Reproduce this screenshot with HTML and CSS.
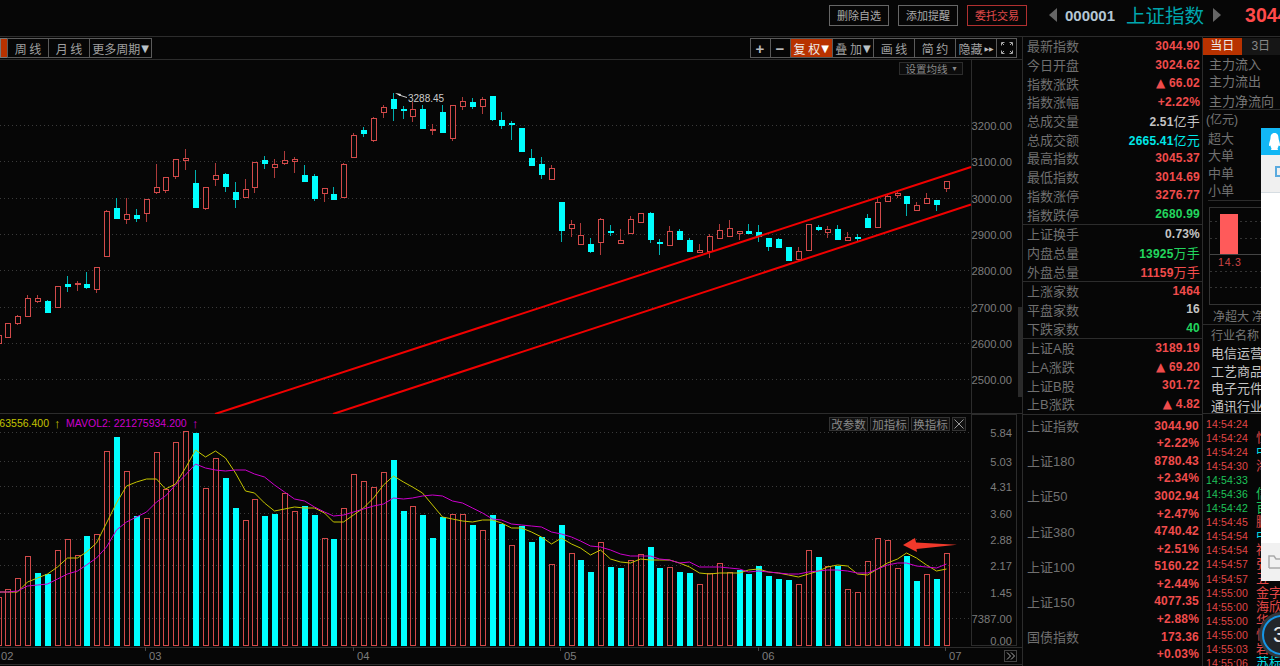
FILE: index.html
```html
<!DOCTYPE html>
<html lang="zh-CN">
<head>
    <meta charset="UTF-8">
    <title>上证指数</title>
    <link rel="stylesheet" href="styles.css">
</head>
<body>
<div class="app">
    <div class="top-bar">
        <button class="top-btn">删除自选</button>
        <button class="top-btn">添加提醒</button>
        <button class="top-btn top-btn-red">委托交易</button>
        <span class="tri-left"></span>
        <span class="stock-code">000001</span>
        <span class="stock-name">上证指数</span>
        <span class="tri-right"></span>
        <span class="stock-price">3044.90</span>
    </div>

    <div class="main">
        <div class="chart-col">
            <div class="toolbar">
                <div class="tool-group">
                    <div class="tool tool-stub"></div>
                    <div class="tool tool-period">周 线</div>
                    <div class="tool tool-period">月 线</div>
                    <div class="tool tool-more">更多周期<span class="caret">▼</span></div>
                </div>
                <div class="tool-group">
                    <div class="tool tool-sign">+</div>
                    <div class="tool tool-sign">−</div>
                    <div class="tool tool-on tool-wide">复 权<span class="caret caret-white">▼</span></div>
                    <div class="tool tool-wide">叠 加<span class="caret">▼</span></div>
                    <div class="tool tool-wide">画 线</div>
                    <div class="tool tool-wide">简 约</div>
                    <div class="tool tool-wide">隐藏<span class="fast">▶▶</span></div>
                    <div class="tool tool-sign">
                        <svg width="12" height="12" viewBox="0 0 12 12" fill="none" stroke="#aaa">
                            <path d="M0.5 3.5V0.5H3.5M8.5 0.5H11.5V3.5M11.5 8.5V11.5H8.5M3.5 11.5H0.5V8.5"/>
                            <path d="M1 1L3 3M11 1L9 3M11 11L9 9M1 11L3 9"/>
                        </svg>
                    </div>
                </div>
            </div>

            <div class="pane">
                <svg id="klineChart" class="chart kline" viewBox="0 60 1022 354"></svg>
                <div class="ma-set">设置均线<span class="ma-caret">▾</span></div>
                <div class="pane-handle"></div>
            </div>

            <div class="pane">
                <svg id="volChart" class="chart vol" viewBox="0 414 1022 252"></svg>
                <div class="vol-tools">
                    <div class="vol-btn">改参数</div>
                    <div class="vol-btn">加指标</div>
                    <div class="vol-btn">换指标</div>
                    <div class="vol-btn vol-close">
                        <svg width="10" height="10" viewBox="0 0 10 10" stroke="#999" fill="none"><path d="M0.5 0.5L9.5 9.5M9.5 0.5L0.5 9.5"/></svg>
                    </div>
                </div>
                <div class="scroll-next">
                    <svg width="10" height="8" viewBox="0 0 10 8" fill="none" stroke="#aaa"><path d="M1 0.5L4.5 4L1 7.5M5 0.5L8.5 4L5 7.5"/></svg>
                </div>
            </div>
        </div>

        <div class="quote-col">
            <div class="quote-section">
                <div class="row"><span class="lbl">最新指数</span><span class="up">3044.90</span></div>
                <div class="row"><span class="lbl">今日开盘</span><span class="up">3024.62</span></div>
                <div class="row"><span class="lbl">指数涨跌</span><span class="up"><span class="arrow">▲</span> 66.02</span></div>
                <div class="row"><span class="lbl">指数涨幅</span><span class="up">+2.22%</span></div>
                <div class="row"><span class="lbl">总成交量</span><span class="flat">2.51<i>亿手</i></span></div>
                <div class="row"><span class="lbl">总成交额</span><span class="cyan">2665.41<i>亿元</i></span></div>
                <div class="row"><span class="lbl">最高指数</span><span class="up">3045.37</span></div>
                <div class="row"><span class="lbl">最低指数</span><span class="up">3014.69</span></div>
                <div class="row"><span class="lbl">指数涨停</span><span class="up">3276.77</span></div>
                <div class="row"><span class="lbl">指数跌停</span><span class="down">2680.99</span></div>
            </div>
            <div class="quote-section">
                <div class="row"><span class="lbl">上证换手</span><span class="flat">0.73%</span></div>
                <div class="row"><span class="lbl">内盘总量</span><span class="down">13925<i>万手</i></span></div>
                <div class="row"><span class="lbl">外盘总量</span><span class="up">11159<i>万手</i></span></div>
            </div>
            <div class="quote-section">
                <div class="row"><span class="lbl">上涨家数</span><span class="up">1464</span></div>
                <div class="row"><span class="lbl">平盘家数</span><span class="flat">16</span></div>
                <div class="row"><span class="lbl">下跌家数</span><span class="down">40</span></div>
            </div>
            <div class="quote-section">
                <div class="row"><span class="lbl">上证A股</span><span class="up">3189.19</span></div>
                <div class="row"><span class="lbl">上A涨跌</span><span class="up"><span class="arrow">▲</span> 69.20</span></div>
                <div class="row"><span class="lbl">上证B股</span><span class="up">301.72</span></div>
                <div class="row"><span class="lbl">上B涨跌</span><span class="up"><span class="arrow">▲</span> 4.82</span></div>
            </div>
            <div class="index-list">
                <div class="idx-row"><span class="lbl">上证指数</span><span class="up">3044.90</span></div>
                <div class="idx-row"><span></span><span class="up">+2.22%</span></div>
                <div class="idx-row"><span class="lbl">上证180</span><span class="up">8780.43</span></div>
                <div class="idx-row"><span></span><span class="up">+2.34%</span></div>
                <div class="idx-row"><span class="lbl">上证50</span><span class="up">3002.94</span></div>
                <div class="idx-row"><span></span><span class="up">+2.47%</span></div>
                <div class="idx-row"><span class="lbl">上证380</span><span class="up">4740.42</span></div>
                <div class="idx-row"><span></span><span class="up">+2.51%</span></div>
                <div class="idx-row"><span class="lbl">上证100</span><span class="up">5160.22</span></div>
                <div class="idx-row"><span></span><span class="up">+2.44%</span></div>
                <div class="idx-row"><span class="lbl">上证150</span><span class="up">4077.35</span></div>
                <div class="idx-row"><span></span><span class="up">+2.88%</span></div>
                <div class="idx-row"><span class="lbl">国债指数</span><span class="up">173.36</span></div>
                <div class="idx-row"><span></span><span class="up">+0.03%</span></div>
            </div>
        </div>

        <div class="flow-col">
            <div class="tabs">
                <div class="tab tab-on">当日</div>
                <div class="tab">3日</div>
            </div>
            <div class="flow-head">
                <div class="flow-line">主力流入</div>
                <div class="flow-line">主力流出</div>
                <div class="flow-line flow-net">主力净流向</div>
            </div>
            <div class="flow-unit">(亿元)</div>
            <div class="flow-sizes">
                <div class="flow-size">超大</div>
                <div class="flow-size">大单</div>
                <div class="flow-size">中单</div>
                <div class="flow-size">小单</div>
            </div>
            <div class="mini-chart">
                <svg width="70" height="96" viewBox="0 0 70 96">
                    <g stroke="#333" stroke-dasharray="2 3">
                        <path d="M0 13.5H70M0 30.5H70M0 63.5H70M0 79.5H70"/>
                    </g>
                    <path d="M0 46.5H70" stroke="#444"/>
                    <rect x="10" y="6" width="18" height="40" fill="#ff5a5a"/>
                    <text x="8" y="58" class="mini-label">14.3</text>
                </svg>
            </div>
            <div class="mini-axis"><span>净超大</span><span>净大单</span></div>
            <div class="sector-list">
                <div class="sector-head">行业名称</div>
                <div class="sector">电信运营</div>
                <div class="sector">工艺商品</div>
                <div class="sector">电子元件</div>
                <div class="sector">通讯行业</div>
            </div>
            <div class="ticks" id="ticks"></div>
        </div>
    </div>

    <div class="chat-window">
        <div class="chat-head">
            <svg width="11" height="17" viewBox="0 0 11 17" fill="#fff"><path d="M5.5 0C8.5 0 9.5 2.5 9.5 5C9.5 7 11 9.5 11 12C11 13.5 10 13 9.5 12.5C9.5 14 8.5 15 8.5 15.5L9 17H2L2.5 15.5C2.5 15 1.5 14 1.5 12.5C1 13 0 13.5 0 12C0 9.5 1.5 7 1.5 5C1.5 2.5 2.5 0 5.5 0Z"/></svg>
        </div>
        <div class="chat-tools"><span class="chat-icon"></span></div>
        <div class="chat-body"></div>
        <div class="chat-foot">
            <svg width="14" height="16" viewBox="0 0 14 16" fill="none" stroke="#aaa" stroke-width="1.5"><path d="M1 14V2H6L8 5H14M1 14H14"/></svg>
        </div>
    </div>
    <div class="badge"><span class="badge-ring">3</span></div>
</div>
<script src="chart.js"></script>
</body>
</html>
```

FILE: styles.css
```css
* {
    box-sizing: border-box;
}
body {
    margin: 0;
    padding: 0;
    background-color: #060606;
    color: #777;
    font-family: "Liberation Sans", "Noto Sans CJK SC", sans-serif;
    font-size: 13px;
    overflow: hidden;
}
.app {
    position: relative;
    width: 1280px;
    height: 666px;
    overflow: hidden;
}

/* top bar */
.top-bar {
    display: flex;
    align-items: center;
    height: 37px;
    padding: 0 0 6px 829px;
    border-bottom: 1px solid #2c2c2c;
    white-space: nowrap;
    overflow: hidden;
}
.top-bar > * {
    flex-shrink: 0;
}
.top-btn {
    width: 60px;
    height: 21px;
    margin-right: 9px;
    padding: 0;
    background-color: transparent;
    border: 1px solid #666;
    color: #aaa;
    font-family: "Noto Sans CJK SC", sans-serif;
    font-size: 11px;
    line-height: 19px;
}
.top-btn-red {
    margin-right: 22px;
    border-color: #b03030;
    color: #e04a4a;
}
.tri-left,
.tri-right {
    width: 0;
    height: 0;
    border-top: 7px solid transparent;
    border-bottom: 7px solid transparent;
}
.tri-left {
    border-right: 8px solid #666;
    margin-right: 8px;
}
.tri-right {
    border-left: 8px solid #666;
    margin-left: 9px;
}
.stock-code {
    color: #b4c6d4;
    font-size: 15px;
    font-weight: bold;
    margin-right: 11px;
}
.stock-name {
    color: #00a5ad;
    font-family: "Noto Sans CJK SC", sans-serif;
    font-size: 19.5px;
    line-height: 30px;
}
.stock-price {
    margin-left: 24px;
    color: #ff4a4a;
    font-size: 19.5px;
    font-weight: bold;
}

/* main area */
.main {
    display: flex;
    height: 629px;
}
.chart-col {
    width: 1022px;
    flex-shrink: 0;
}
.toolbar {
    display: flex;
    justify-content: space-between;
    height: 23px;
    padding: 1px 5px 2px 0;
    border-bottom: 1px solid #2c2c2c;
}
.tool-group {
    display: flex;
}
.tool {
    display: flex;
    align-items: center;
    justify-content: center;
    height: 20px;
    border: 1px solid #5a5a5a;
    margin-right: -1px;
    color: #a0a0a0;
    font-family: "Noto Sans CJK SC", sans-serif;
    font-size: 12px;
    white-space: pre;
}
.tool-group:last-child .tool:last-child {
    margin-right: 0;
}
.tool-stub {
    width: 8px;
    background-color: #b83200;
    border-color: #777;
}
.tool-period {
    width: 42px;
}
.tool-more {
    width: 63px;
}
.tool-sign {
    width: 21px;
    font-family: "Liberation Sans", sans-serif;
    font-size: 15px;
    font-weight: bold;
    color: #bbb;
}
.tool-wide {
    width: 42px;
}
.tool-on {
    background-color: #b83200;
    color: #eee;
    width: 43.5px;
}
.caret {
    font-family: "DejaVu Sans", sans-serif;
    font-size: 10px;
    margin-left: 1px;
    color: #b9c2c8;
}
.caret-white {
    color: #fff;
}
.fast {
    font-family: "DejaVu Sans", sans-serif;
    font-size: 6px;
    margin-left: 2px;
    color: #bbb;
}

.pane {
    position: relative;
}
.chart {
    display: block;
    width: 1022px;
}
.kline {
    height: 354px;
}
.vol {
    height: 252px;
}
.axis-text {
    fill: #7c7c7c;
    font-family: "Liberation Sans", sans-serif;
    font-size: 11.2px;
}
.peak-text {
    fill: #ccc;
    font-family: "Liberation Sans", sans-serif;
    font-size: 10px;
}
.ma-text {
    font-family: "Liberation Sans", sans-serif;
    font-size: 10.5px;
}
.ma-arrow {
    font-family: "Liberation Sans", sans-serif;
    font-size: 13px;
}
.ma-set {
    position: absolute;
    left: 899px;
    top: 2px;
    display: flex;
    align-items: center;
    justify-content: center;
    width: 64px;
    height: 13px;
    background-color: #0c0c0c;
    border: 1px solid #2c2c2c;
    color: #8a8a8a;
    font-family: "Noto Sans CJK SC", sans-serif;
    font-size: 10.5px;
}
.ma-caret {
    margin-left: 5px;
    font-family: "DejaVu Sans", sans-serif;
    font-size: 8px;
}
.pane-handle {
    position: absolute;
    left: 1018px;
    top: 247px;
    width: 4px;
    height: 90px;
    background-color: #2a2a2a;
}
.vol-tools {
    position: absolute;
    left: 829px;
    top: 3px;
    display: flex;
    gap: 2px;
}
.vol-btn {
    display: flex;
    align-items: center;
    justify-content: center;
    width: 39px;
    height: 14px;
    border: 1px solid #333;
    background-color: #111;
    color: #888;
    font-family: "Noto Sans CJK SC", sans-serif;
    font-size: 11.5px;
}
.vol-close {
    width: 14px;
}
.scroll-next {
    position: absolute;
    left: 1004px;
    top: 236px;
    display: flex;
    align-items: center;
    justify-content: center;
    width: 13px;
    height: 12px;
    border: 1px solid #444;
}

/* quote table */
.quote-col {
    width: 181px;
    flex-shrink: 0;
    border-left: 1px solid #2c2c2c;
    border-right: 1px solid #2c2c2c;
    font-weight: bold;
    font-size: 12px;
    letter-spacing: 0.2px;
}
.quote-section {
    border-bottom: 1px solid #2c2c2c;
}
.row {
    display: flex;
    justify-content: space-between;
    align-items: center;
    height: 18.7px;
    padding: 0 2px 1px 4px;
    white-space: nowrap;
}
.lbl {
    color: #707070;
    font-family: "Liberation Sans", "Noto Sans CJK SC", sans-serif;
    font-size: 13px;
    font-weight: normal;
    letter-spacing: 0;
}
.arrow {
    font-family: "DejaVu Sans", sans-serif;
    font-weight: normal;
}
.row i {
    font-family: "Noto Sans CJK SC", sans-serif;
    font-size: 13px;
    font-style: normal;
    font-weight: normal;
}
.up {
    color: #f04c4c;
}
.down {
    color: #22d65e;
}
.flat {
    color: #c4c4c4;
}
.cyan {
    color: #00e8e8;
}
.index-list {
    padding-top: 2px;
}
.idx-row {
    display: flex;
    justify-content: space-between;
    align-items: center;
    height: 17.6px;
    padding: 0 3px 0 4px;
}

/* capital flow and tick list */
.flow-col {
    flex: 1;
    min-width: 0;
    overflow: hidden;
}
.tabs {
    display: flex;
    height: 17px;
    margin-top: 1px;
}
.tab {
    width: 45px;
    background-color: #161616;
    color: #888;
    text-align: center;
    font-size: 12px;
    line-height: 17px;
}
.tab-on {
    background-color: #b83200;
    color: #eee;
}
.flow-head {
    height: 55px;
    margin-left: 6px;
    padding-top: 1px;
    white-space: nowrap;
    border-bottom: 1px solid #2c2c2c;
}
.flow-line {
    height: 17px;
    line-height: 17px;
}
.flow-net {
    height: 19px;
    line-height: 23px;
}
.flow-unit {
    height: 18px;
    line-height: 20px;
    padding-left: 3px;
    font-size: 12px;
}
.flow-sizes {
    height: 73px;
    margin-left: 5px;
    padding-top: 2px;
    border-bottom: 1px solid #2c2c2c;
}
.flow-size {
    height: 17.4px;
    line-height: 17.4px;
    color: #707070;
}
.mini-chart {
    height: 98px;
    margin: 6px 0 0 6px;
    border: 1px solid #333;
    border-right: 0;
}
.mini-chart svg {
    display: block;
}
.mini-label {
    fill: #d04646;
    font-family: "Liberation Sans", sans-serif;
    font-size: 10.5px;
    letter-spacing: 0.8px;
}
.mini-axis {
    display: flex;
    gap: 3px;
    height: 19px;
    padding: 2px 0 0 10px;
    line-height: 20px;
    font-size: 12px;
    white-space: nowrap;
}
.sector-list {
    height: 90px;
    padding: 2px 0 0 8px;
    border-top: 1px solid #2c2c2c;
    border-bottom: 1px solid #2c2c2c;
    white-space: nowrap;
}
.sector-head {
    height: 18px;
    line-height: 18px;
    font-size: 12px;
}
.sector {
    height: 17.6px;
    line-height: 17.6px;
    color: #c4c4c4;
}
.ticks {
    padding: 3px 0 0 3px;
}
.tick {
    display: flex;
    height: 14.05px;
    line-height: 14.05px;
    white-space: nowrap;
    color: #e04646;
}
.tick-time {
    width: 50px;
    flex-shrink: 0;
    font-size: 10.5px;
    letter-spacing: 0.15px;
}
.tick-name {
    font-size: 13px;
}
.tick-green {
    color: #1fc45a;
}
.name-cyan {
    color: #00d8e0;
}

/* overlays */
.chat-window {
    position: absolute;
    left: 1261px;
    top: 128px;
    width: 40px;
    height: 453px;
    display: flex;
    flex-direction: column;
    background-color: #fff;
}
.chat-head {
    height: 27px;
    padding: 5px 0 0 8px;
    background-color: #12b7f5;
}
.chat-tools {
    height: 38px;
    padding: 11px 0 0 14px;
    background-color: #f0f0f0;
    border-bottom: 1px solid #d6dde2;
}
.chat-icon {
    display: block;
    width: 12px;
    height: 11px;
    border: 2px solid #5aaade;
}
.chat-body {
    flex: 1;
}
.chat-foot {
    height: 38px;
    padding: 11px 0 0 7px;
    background-color: #f1f1f1;
}
.badge {
    position: absolute;
    left: 1259px;
    top: 612px;
    width: 46px;
    height: 46px;
    padding: 3px;
    border-radius: 50%;
    background-color: #34383c;
}
.badge-ring {
    display: block;
    width: 40px;
    height: 40px;
    border: 2px solid #1596e6;
    border-radius: 50%;
    background-color: #22262a;
    color: #e8e8e8;
    font-size: 22px;
    line-height: 36px;
    padding-left: 9px;
}
```

FILE: chart.js
```js
const SVG_NS = 'http://www.w3.org/2000/svg';
const RED = '#d24a4a';
const RED_WICK = '#ad3a3a';
const CYAN = '#00ffff';
const CYAN_WICK = '#00b0b0';
const GRID = '#3a3a3a';
const LINE = '#2c2c2c';

// first entry sits just off the left edge (index -1)
const candles = [
    ['r',335,335,343,344],['r',323,323,337,338],['r',315,316,323,325],['r',295,298,316,317],
    ['r',295,298,301,303],['c',300,301,312,313],['r',286,286,307,307],['c',276,284,286,292],
    ['r',281,283,284,291],['c',272,284,287,289],['r',267,267,289,293],['r',210,211,256,256],
    ['c',198,208,218,219],['r',198,214,219,224],['c',209,215,218,222],['r',199,199,213,222],
    ['r',164,187,192,194],['r',177,177,190,193],['r',159,159,176,179],['r',149,158,160,170],
    ['c',170,183,207,208],['r',187,187,208,210],['r',163,175,179,186],['c',173,174,186,192],
    ['c',182,192,199,208],['r',179,189,197,197],['r',162,162,187,193],['c',156,160,163,169],
    ['r',159,164,167,178],['r',151,160,163,165],['r',157,159,161,173],['c',165,175,181,181],
    ['c',174,176,198,201],['r',188,188,193,202],['c',187,194,199,200],['r',163,164,197,197],
    ['r',133,135,157,157],['c',127,130,133,137],['r',117,118,140,142],['r',105,107,112,118],
    ['c',93,99,108,121],['c',106,109,110,119],['r',102,109,116,122],['c',105,109,128,129],
    ['r',124,129,130,135],['c',105,112,132,132],['r',105,105,138,141],['r',97,101,106,110],
    ['c',98,102,106,109],['r',97,99,106,114],['c',96,96,119,121],['c',112,120,125,129],
    ['c',121,123,124,140],['c',128,128,151,152],['c',149,158,165,165],['c',157,164,174,179],
    ['r',165,168,179,179],['c',202,202,230,242],['r',220,224,228,237],['r',223,235,244,245],
    ['c',238,244,251,253],['r',218,219,242,255],['c',225,231,232,236],['r',229,240,243,243],
    ['r',216,219,233,233],['r',213,213,222,222],['c',212,213,239,243],['c',239,242,243,255],
    ['r',226,231,245,246],['c',229,231,239,240],['c',238,240,251,252],['r',244,250,252,252],
    ['r',234,236,251,258],['r',224,230,238,238],['r',220,228,236,237],['r',231,231,233,240],
    ['c',224,231,233,234],['c',225,232,236,242],['c',238,238,246,251],['c',238,239,247,248],
    ['c',247,247,260,261],['r',247,251,259,261],['r',224,224,250,250],['c',225,227,229,231],
    ['r',226,229,232,238],['c',225,229,239,240],['r',232,237,240,240],['c',234,237,238,242],
    ['c',214,218,227,227],['r',198,202,227,227],['r',194,196,201,201],['r',191,193,195,198],
    ['c',196,196,203,216],['r',202,205,210,211],['r',193,198,203,203],['c',200,200,204,211],
    ['r',181,181,188,192]
];

const volumes = [
    ['r',597],['r',589],['r',578],['r',556],['c',573],['c',574],['r',550],['r',539],['r',555],['c',536],
    ['r',534],['r',451],['c',437],['r',471],['c',516],['r',518],['r',452],['r',489],['r',442],['r',431],
    ['c',433],['r',488],['r',458],['c',478],['c',508],['r',520],['r',499],['c',516],['c',514],['r',493],
    ['r',511],['c',506],['c',515],['r',538],['c',539],['r',508],['r',474],['r',481],['r',487],['r',472],
    ['c',460],['c',511],['r',506],['c',515],['c',538],['c',517],['r',514],['r',514],['c',525],['r',530],
    ['c',515],['c',524],['r',545],['c',526],['c',542],['c',537],['r',564],['c',525],['r',553],['c',560],
    ['c',572],['r',542],['c',567],['c',568],['r',560],['r',554],['c',547],['c',568],['r',567],['c',572],
    ['c',573],['r',584],['r',573],['r',563],['r',572],['c',570],['c',574],['c',566],['c',576],['c',579],
    ['c',580],['r',584],['r',550],['c',557],['r',566],['c',566],['r',589],['r',592],['r',561],['r',538],
    ['r',540],['r',568],['c',556],['c',581],['r',574],['c',579],['r',553]
];

const maYellow = [
    592,592,592,582,578,574,567,558,558,552,543,523,503,486,482,479,479,489,484,468,450,457,451,458,473,491,493,503,511,509,507,508,508,513,522,
    522,515,508,498,485,476,482,487,493,505,517,519,521,522,520,520,523,528,528,532,537,544,538,544,548,555,550,559,562,563,559,560,560,560,563,
    567,573,574,573,573,573,570,569,572,573,575,577,574,571,567,565,566,574,575,569,563,559,553,558,565,571,569
];
const maPurple = [
    592,592,591,586,585,584,579,574,571,565,558,547,530,522,517,512,502,496,485,475,464,468,470,471,470,470,474,477,485,492,499,501,507,512,516,
    515,512,509,506,504,498,499,498,496,495,496,501,503,508,513,519,520,524,525,526,527,532,534,537,541,546,547,550,554,556,556,556,559,560,563,
    562,567,567,567,568,569,572,571,572,573,574,574,572,571,570,570,571,573,573,569,565,563,563,566,567,568,564
];

const kAxis = [
    ['3200.00',125.5],['3100.00',161.5],['3000.00',198.5],['2900.00',234.5],
    ['2800.00',270.5],['2700.00',307.5],['2600.00',343.5],['2500.00',379.5]
];
const volAxis = [
    ['5.84',432.5],['5.03',461.5],['4.31',486.5],['3.60',513.5],
    ['2.88',539.5],['2.17',565.5],['1.45',592.5],['7387.00',618.5]
];

const ticks = [
    ['14:54:24','',0,''],['14:54:24','恒',0,''],['14:54:24','中',0,'c'],['14:54:30','海',0,''],
    ['14:54:33','',1,''],['14:54:36','信',1,''],['14:54:42','百',1,''],['14:54:45','鹏',0,''],
    ['14:54:54','中',0,'c'],['14:54:54','福',0,''],['14:54:57','张',0,''],['14:54:57','五',0,''],
    ['14:55:00','金字',0,''],['14:55:00','海欣',0,''],['14:55:00','华',0,''],['14:55:00','恒',0,''],
    ['14:55:03','岩',0,''],['14:55:06','苏标',0,'c']
];

function el(parent, name, attrs, text) {
    const node = document.createElementNS(SVG_NS, name);
    for (const key in attrs) {
        node.setAttribute(key, attrs[key]);
    }
    if (text) node.textContent = text;
    parent.appendChild(node);
    return node;
}

function xAt(i) {
    return Math.round(8.4 + 9.88 * (i - 1));
}

function hLine(svg, y, x2) {
    el(svg, 'path', { d: `M0 ${y}H${x2}`, stroke: GRID, 'stroke-dasharray': '1 3' });
}

function drawKline() {
    const svg = document.getElementById('klineChart');
    kAxis.forEach(([label, y]) => {
        hLine(svg, y, 970);
        el(svg, 'text', { x: 1012, y: y + 4.5, 'text-anchor': 'end', class: 'axis-text' }, label);
    });
    el(svg, 'path', { d: 'M971.5 60V414', stroke: LINE });
    el(svg, 'path', { d: 'M0 413.5H1022', stroke: LINE });

    candles.forEach((c, i) => {
        const x = xAt(i);
        const [type, high, top, bottom, low] = c;
        const wick = type === 'r' ? RED_WICK : CYAN_WICK;
        el(svg, 'path', { d: `M${x - 0.5} ${high}V${low}`, stroke: wick });
        if (type === 'r') {
            el(svg, 'rect', { x: x - 2.5, y: top + 0.5, width: 5, height: bottom - top, fill: '#060606', stroke: RED });
        } else {
            el(svg, 'rect', { x: x - 3, y: top, width: 6, height: bottom - top + 1, fill: CYAN });
        }
    });

    // channel lines
    el(svg, 'path', { d: 'M215 414L971 167', stroke: '#f00000', 'stroke-width': 2, fill: 'none' });
    el(svg, 'path', { d: 'M333 414L971 204.5', stroke: '#f00000', 'stroke-width': 2, fill: 'none' });

    // highest point marker
    el(svg, 'path', { d: 'M395 93L401 94L400 96Z', fill: '#eee' });
    el(svg, 'path', { d: 'M399 95L407 97.5', stroke: '#ccc' });
    el(svg, 'text', { x: 408, y: 102, class: 'peak-text' }, '3288.45');
}

function drawVolume() {
    const svg = document.getElementById('volChart');
    volAxis.forEach(([label, y]) => {
        hLine(svg, y, 970);
        el(svg, 'text', { x: 1012, y: y + 4.5, 'text-anchor': 'end', class: 'axis-text' }, label);
    });
    el(svg, 'text', { x: 1012, y: 644.5, 'text-anchor': 'end', class: 'axis-text' }, '0.00');
    el(svg, 'rect', { x: 971.5, y: 414.5, width: 45, height: 231, fill: 'none', stroke: LINE });
    el(svg, 'path', { d: 'M0 647.5H1022M0 664.5H1022', stroke: LINE });

    volumes.forEach((v, i) => {
        const x = xAt(i);
        const [type, top] = v;
        if (type === 'r') {
            el(svg, 'rect', { x: x - 2.5, y: top + 0.5, width: 5, height: 645 - top, fill: 'none', stroke: RED });
        } else {
            el(svg, 'rect', { x: x - 3, y: top, width: 6, height: 646 - top, fill: CYAN });
        }
    });

    const line = (data, color) => {
        const pts = data.map((y, i) => `${xAt(i) - 0.5},${y}`).join(' ');
        el(svg, 'polyline', { points: pts, fill: 'none', stroke: color });
    };
    line(maYellow, '#c4c400');
    line(maPurple, '#cc00cc');

    el(svg, 'text', { x: 49, y: 427, 'text-anchor': 'end', fill: '#c4c400', class: 'ma-text' }, '63556.400');
    el(svg, 'text', { x: 54, y: 428, fill: '#c4c400', class: 'ma-arrow' }, '↑');
    el(svg, 'text', { x: 66, y: 427, fill: '#cc00cc', class: 'ma-text' }, 'MAVOL2: 221275934.200');
    el(svg, 'text', { x: 192, y: 428, fill: '#cc00cc', class: 'ma-arrow' }, '↑');

    [['02', 1], ['03', 149], ['04', 357], ['05', 564], ['06', 762], ['07', 949]].forEach(([label, x]) => {
        el(svg, 'text', { x: x, y: 660, class: 'axis-text' }, label);
        el(svg, 'path', { d: `M${x - 3.5} 647V651`, stroke: '#444' });
    });

    // hand drawn arrow on the screenshot
    el(svg, 'polygon', { points: '903,545 915,538 916,542.5 957,544.7 916.5,549 917,552', fill: '#f0392b' });
}

function fillTicks() {
    const box = document.getElementById('ticks');
    ticks.forEach(([time, name, green, nameColor]) => {
        const row = document.createElement('div');
        row.className = green ? 'tick tick-green' : 'tick';
        const nameClass = nameColor === 'c' ? 'tick-name name-cyan' : 'tick-name';
        row.innerHTML = `<span class="tick-time">${time}</span><span class="${nameClass}">${name}</span>`;
        box.appendChild(row);
    });
}

drawKline();
drawVolume();
fillTicks();
```
